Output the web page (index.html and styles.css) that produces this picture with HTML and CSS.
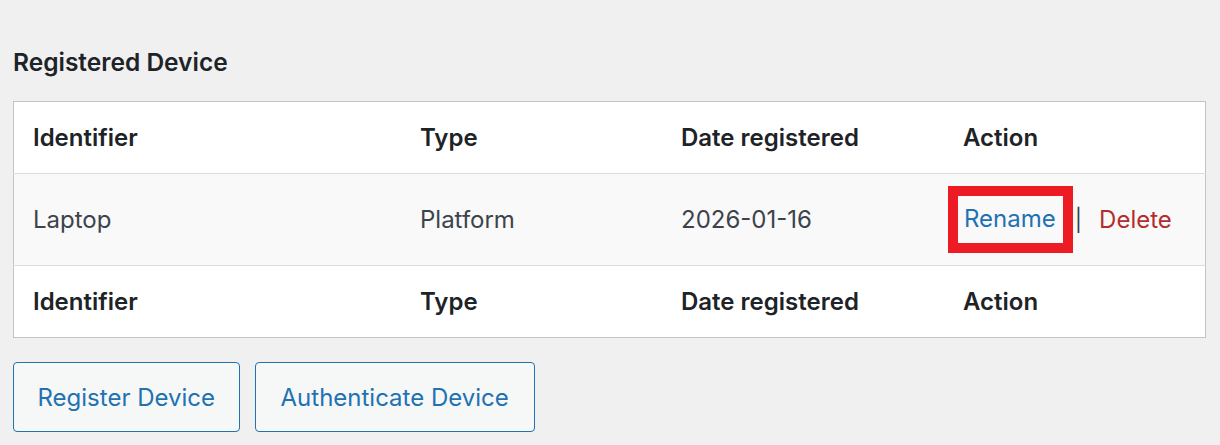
FILE: index.html
```html
<!DOCTYPE html>
<html>
<head>
<meta charset="utf-8">
<link rel="stylesheet" href="styles.css">
</head>
<body>
<div class="wrap">
  <h2 class="title">Registered Device</h2>
  <table class="devices">
    <thead>
      <tr>
        <th class="c1">Identifier</th>
        <th class="c2">Type</th>
        <th class="c3">Date registered</th>
        <th class="c4">Action</th>
      </tr>
    </thead>
    <tbody>
      <tr>
        <td>Laptop</td>
        <td>Platform</td>
        <td>2026-01-16</td>
        <td class="actions"><span class="hl"><a class="rename" href="#">Rename</a></span><span class="sep">|</span><a class="delete" href="#">Delete</a></td>
      </tr>
    </tbody>
    <tfoot>
      <tr>
        <th>Identifier</th>
        <th>Type</th>
        <th>Date registered</th>
        <th>Action</th>
      </tr>
    </tfoot>
  </table>
  <div class="buttons">
    <button class="btn">Register Device</button>
    <button class="btn btn-wide">Authenticate Device</button>
  </div>
</div>
</body>
</html>
```
FILE: styles.css
```css
html, body {
  margin: 0;
  padding: 0;
  background: #f0f0f1;
}
body {
  font-family: Inter, "Noto Sans", sans-serif;
  color: #1d2327;
}
.wrap {
  padding: 0 14px 0 13px;
}
.title {
  margin: 0;
  padding-top: 47px;
  padding-bottom: 24px;
  height: 30px;
  font-size: 24.5px;
  line-height: 30px;
  font-weight: 600;
  color: #1d2327;
}
.devices {
  width: 100%;
  table-layout: fixed;
  border-collapse: collapse;
  border: 1px solid #c3c4c7;
  background: #fff;
  font-size: 24px;
}
.devices th {
  text-align: left;
  font-weight: 600;
  color: #1d2327;
  height: 71px;
  padding: 0 0 0 19px;
}
.devices thead th {
  border-bottom: 1px solid #dcdcde;
}
.devices tfoot th {
  border-top: 1px solid #dcdcde;
}
.devices .c1 { width: 368px; }
.devices .c2 { width: 242px; }
.devices .c3 { width: 263px; }
.devices tbody tr {
  background: #f9f9f9;
}
.devices td {
  height: 91px;
  padding: 0 0 0 19px;
  color: #3c434a;
  font-weight: 400;
}
.actions {
  white-space: nowrap;
}
.hl {
  display: inline-block;
  border: 10px solid #ed1c24;
  padding: 8px 7px 9px 6px;
  margin-left: -15px;
  line-height: 30px;
  vertical-align: middle;
}
.rename {
  color: #2271b1;
  text-decoration: none;
}
.sep {
  display: inline-block;
  font-size: 22px;
  font-weight: 400;
  color: #3c434a;
  margin: 0 17px 0 2px;
  vertical-align: middle;
}
.delete {
  color: #b32d2e;
  text-decoration: none;
  vertical-align: middle;
}
.buttons {
  display: flex;
  gap: 15px;
  margin-top: 24px;
}
.btn {
  font-family: Inter, "Noto Sans", sans-serif;
  font-size: 24px;
  color: #2271b1;
  background: #f6f7f7;
  border: 1px solid #2271b1;
  border-radius: 4px;
  height: 70px;
  padding: 0 23.5px;
  cursor: pointer;
}
.btn-wide {
  padding: 0 25px;
}
```
